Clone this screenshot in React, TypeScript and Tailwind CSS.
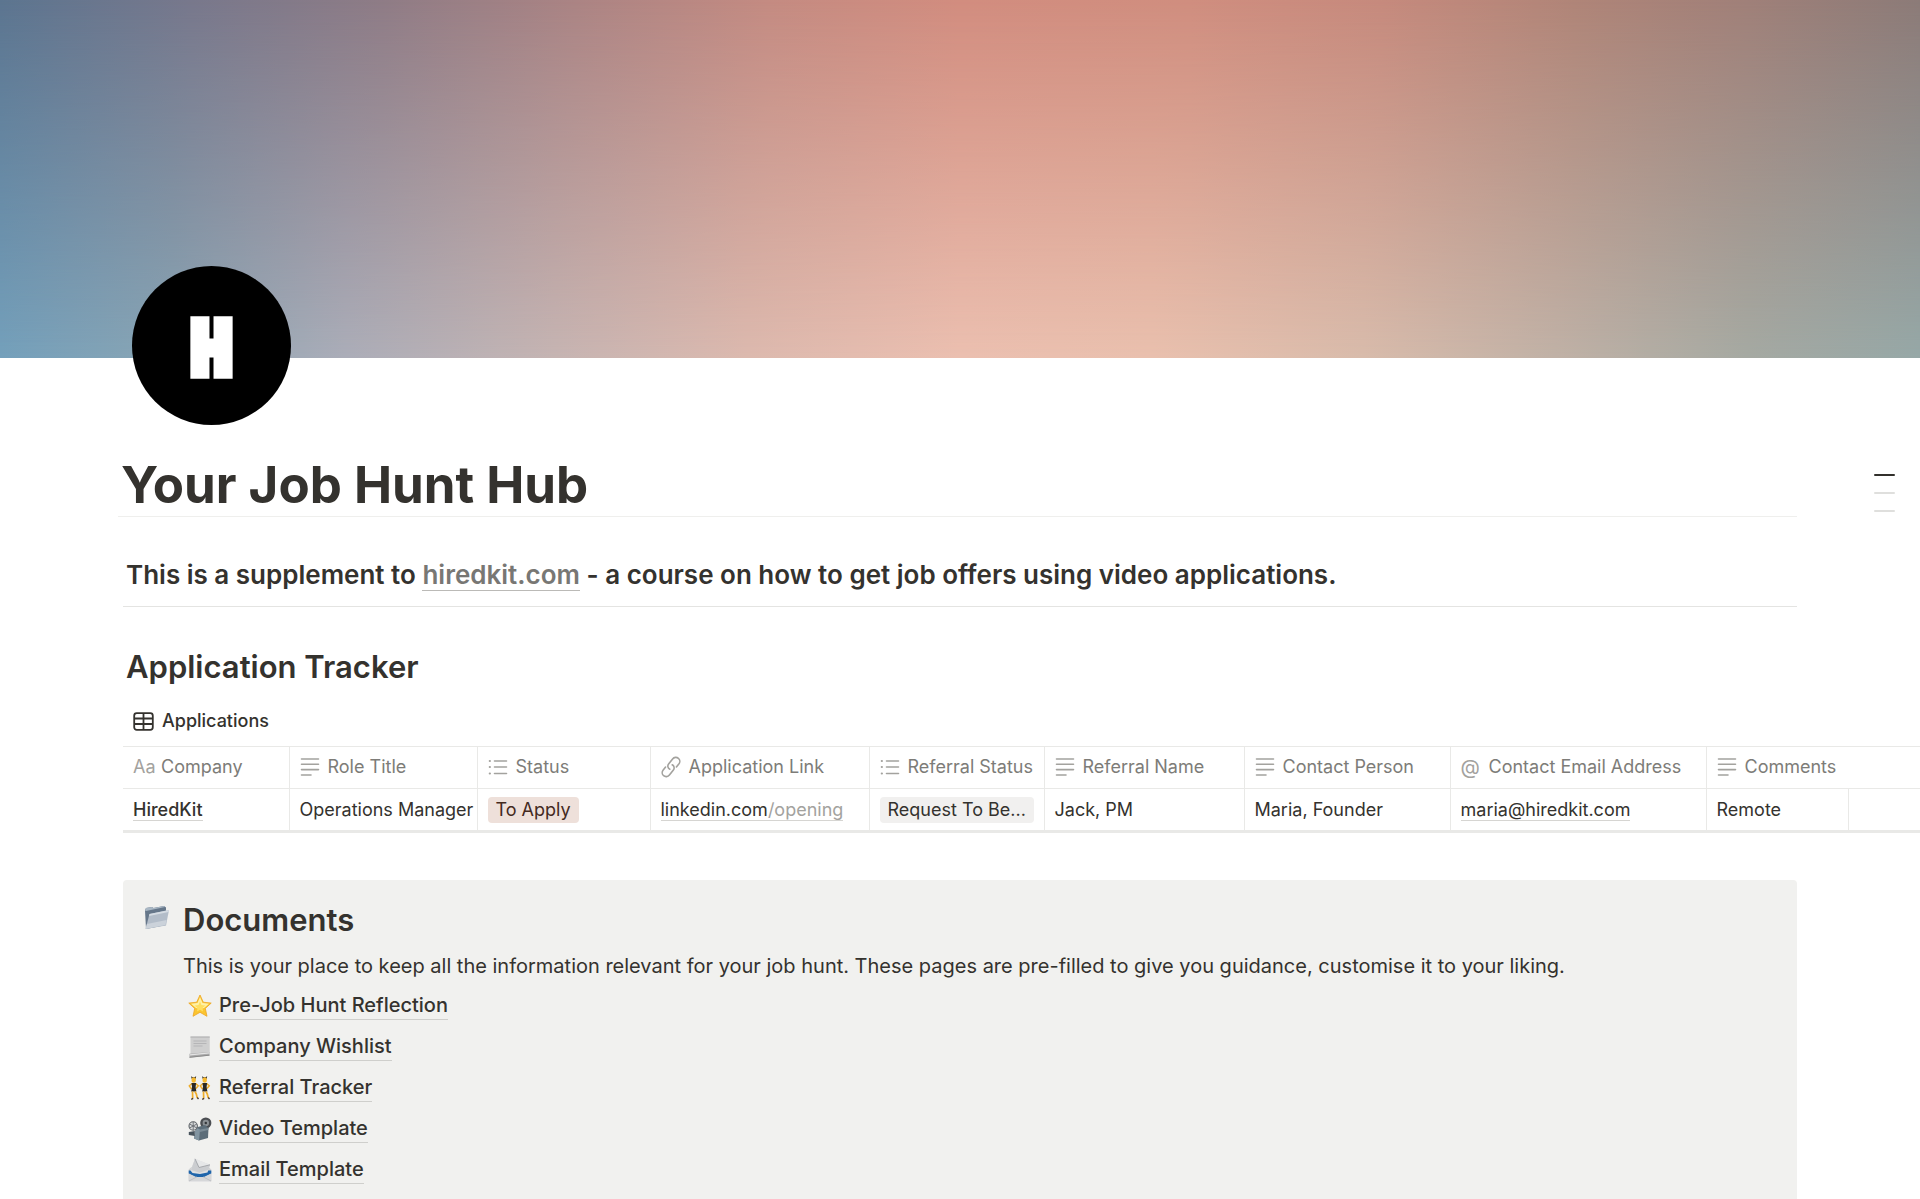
import type { ReactNode } from "react";

function TextIcon() {
  return (
    <svg width="20" height="20" viewBox="0 0 20 20" fill="none" stroke="currentColor" strokeWidth="1.6" strokeLinecap="round" className="shrink-0">
      <path d="M1.5 2h17M1.5 7.3h17M1.5 12.6h17M1.5 18h9.5" />
    </svg>
  );
}

function ListIcon() {
  return (
    <svg width="20" height="20" viewBox="0 0 20 20" fill="none" stroke="currentColor" strokeWidth="1.6" strokeLinecap="round" className="shrink-0">
      <path d="M6.5 4h12M6.5 10h12M6.5 16.5h12" />
      <path d="M1.8 4h.1M1.8 10h.1M1.8 16.5h.1" strokeWidth="2.2" />
    </svg>
  );
}

function LinkIcon() {
  return (
    <svg width="20" height="24" viewBox="0 0 20 24" fill="none" stroke="currentColor" strokeWidth="1.6" strokeLinecap="round" className="-my-[2px] shrink-0">
      <path d="M8.8 14.2c-2-.9-2.600-3.400-1.200-5.200l4-5c1.500-1.900 4.100-2.100 5.800-.7 1.700 1.400 1.900 3.900.4 5.800l-2.400 2.900" />
      <path d="M11.2 9.8c2 .9 2.600 3.400 1.200 5.200l-4 5c-1.500 1.900-4.100 2.100-5.800.7-1.700-1.400-1.900-3.900-.4-5.800l2.400-2.900" />
    </svg>
  );
}

function TableIcon() {
  return (
    <svg width="21" height="21" viewBox="0 0 21 21" fill="none" stroke="currentColor" strokeWidth="1.8" className="shrink-0">
      <rect x="1.2" y="2.2" width="18.6" height="16.6" rx="2.5" />
      <path d="M1.2 7.5h18.6M1.2 13h18.6M10.5 2.2v16.6" />
    </svg>
  );
}

function Folder() {
  return (
    <svg width="26" height="26" viewBox="0 0 26 26" className="mt-[5px] shrink-0">
      <path d="M1 5.500 2 3l6-1 1.500 1L20 1l2 1.500V20L2 24z" fill="#66778a" />
      <path d="M1 5.500 2 3l6-1 1.500 1L20 1l1 1-19 4z" fill="#a9b7c4" />
      <path d="M5.500 9 25 5l-3 15.500L1.500 24z" fill="#b3bdc9" />
      <path d="M5.500 9 25 5l-.4 2L5 11z" fill="#d5dce3" />
      <path d="m3 19 19.500-4-1 5L1.500 24z" fill="#cbd2da" />
    </svg>
  );
}

function Star() {
  return (
    <svg width="24" height="24" viewBox="0 0 24 24">
      <path d="m12 1 3.300 7.200 7.900.9-5.900 5.300 1.700 7.900-7-4-7 4 1.700-7.900L.8 9.100l7.900-.9z" fill="#fbc52f" stroke="#eda41f" strokeWidth=".8" strokeLinejoin="round" />
      <path d="m12 3 2.500 6 6.500.8-5 4.200-4 1-4-1-5-4.200L9.500 9z" fill="#fff1a8" />
      <path d="M12 7.500 13.500 11l4 .5-3 2.500.5 3.500-3-1.800L9 17.500l.5-3.500-3-2.500 4-.5z" fill="#ffdf61" />
    </svg>
  );
}

function Scroll() {
  return (
    <svg width="24" height="24" viewBox="0 0 24 24">
      <path d="M2.500 1.500h19.200v16.800L2.500 20z" fill="#cfcfcf" />
      <path d="M2.500 1.500h19.200v1.200H2.500z" fill="#b5b5b5" />
      <path d="M5.500 6h13M5.500 8.500h13M5.500 11h9" stroke="#b2b2b4" strokeWidth=".9" />
      <path d="m1.500 18.800 20-1.800v3.500l-20 2.300z" fill="#aaa" />
      <path d="m2 19.800 19.500-1.900" stroke="#e4e4e4" strokeWidth="1.2" />
      <path d="m1.500 22.300 20-2.100" stroke="#878787" strokeWidth=".9" />
    </svg>
  );
}

function Dancer() {
  return (
    <>
      <path d="M3.800 3 3 .3l1.700 1h1.800L8.200.3 7.500 3z" fill="#2a2724" />
      <ellipse cx="5.7" cy="4" rx="2.2" ry="2.7" fill="#f5b82e" />
      <path d="M4 7.500 1.300 9.800 3.500 13M7.600 7.500l2.600 2.300L8 12.500" fill="none" stroke="#f0ad2a" strokeWidth="1.5" />
      <path d="M3.500 7h4.600l-.5 4 .8 4.500H3.200L4 11z" fill="#2b2825" />
      <path d="m4.500 15.500.2 6.500M7 15.500 8.300 18l1 4" fill="none" stroke="#f0ad2a" strokeWidth="1.7" />
      <path d="m5.200 22.300-2 1M9.300 21.500l1.200 1.500" stroke="#4a3524" strokeWidth="1.3" />
    </>
  );
}

function Dancers() {
  return (
    <svg width="24" height="24" viewBox="0 0 24 24">
      <Dancer />
      <g transform="translate(11 0)">
        <Dancer />
      </g>
    </svg>
  );
}

function Projector() {
  return (
    <svg width="24" height="24" viewBox="0 0 24 24">
      <circle cx="17.8" cy="6" r="5.6" fill="#4b4e52" />
      <circle cx="17.8" cy="6" r="3.2" fill="#8c9195" />
      <circle cx="17.8" cy="6" r="1.2" fill="#34373a" />
      <path d="m8 10.500 9-2.500 3.500 3-.5 10-9 2.500-5-2z" fill="#5c6d79" />
      <path d="m8 10.500 4 2-1 11-5-2z" fill="#8295a1" />
      <path d="m12 12.500 8.500-1.500-.2 2L12 15z" fill="#7b8b96" />
      <circle cx="5.2" cy="9" r="4.2" fill="#d8dadb" stroke="#5d6266" strokeWidth="1.1" />
      <path d="M5.200 5v8M1.500 7l7.400 4M1.500 11l7.400-4" stroke="#666b70" strokeWidth=".9" />
      <path d="m.8 15 6-1v5l-6-1z" fill="#48545d" />
    </svg>
  );
}

function Envelope() {
  return (
    <svg width="24" height="24" viewBox="0 0 24 24">
      <path d="M.7 11.500 3.500 9h17l2.800 2.500V23.300H.7z" fill="#cfd0d2" />
      <path d="M.7 12.500h22.600v3L17 19H7L.7 15.500z" fill="#1f65ab" />
      <path d="M2.500 12.500 7 .8l15 6-2.500 7.700L12 16l-7.500-1z" fill="#dfe0e1" />
      <path d="m7 .8 4 8.700L22 6.800l-1.500 5-9 3L3 12z" fill="#cbcdd0" />
      <path d="m7 .8 4 8.700L22 6.800z" fill="#e6e7e8" />
      <path d="m7 .8 4 8.700L22 6.800" fill="none" stroke="#9fa2a6" strokeWidth=".9" />
      <path d="m.7 15.500 7 3.200q4.300 1 8.600 0l7-3.200v7.800H.7z" fill="#d6d7d9" />
      <path d="m1 23 8-4.200M23 23l-8-4.200" stroke="#b4b6b9" strokeWidth=".7" />
    </svg>
  );
}

type Column = { name: string; icon: ReactNode };

const columns: Column[] = [
  { name: "Company", icon: <span className="w-5 shrink-0">Aa</span> },
  { name: "Role Title", icon: <TextIcon /> },
  { name: "Status", icon: <ListIcon /> },
  { name: "Application Link", icon: <LinkIcon /> },
  { name: "Referral Status", icon: <ListIcon /> },
  { name: "Referral Name", icon: <TextIcon /> },
  { name: "Contact Person", icon: <TextIcon /> },
  { name: "Contact Email Address", icon: <span className="w-5 shrink-0 text-xl leading-5">@</span> },
  { name: "Comments", icon: <TextIcon /> },
];

const documents = [
  { title: "Pre-Job Hunt Reflection", icon: <Star /> },
  { title: "Company Wishlist", icon: <Scroll /> },
  { title: "Referral Tracker", icon: <Dancers /> },
  { title: "Video Template", icon: <Projector /> },
  { title: "Email Template", icon: <Envelope /> },
];

function Cover() {
  return (
    <div className="h-[358px] shrink-0 bg-[linear-gradient(90deg,#5c7590,#78788c_10%,#8f7c86_20%,#ab8484_30%,#c48b82_40%,#d28d7f_50%,#d08e7f_62%,#c68a7d_72%,#b08578_82%,#a08079_91%,#8c7b78)]">
      <div className="h-full bg-[linear-gradient(90deg,#74a0bb,#8aa5b4_9%,#abadb8_18%,#c6b4b2_29%,#dcb9ae_39%,#ebbfb0_50%,#e9c0ae_60%,#d8bbab_71%,#c0b1a6_81%,#a5a9a2_91%,#96a8a7)] [mask-image:linear-gradient(transparent,black)]" />
    </div>
  );
}

function Tracker() {
  return (
    <div className="pl-[123px]">
      <table className="w-full table-fixed border-collapse border-t border-b-3 border-[#e9e9e7] text-left text-lg leading-6">
        <colgroup>
          <col className="w-[166px]" />
          <col className="w-[188px]" />
          <col className="w-[173px]" />
          <col className="w-[219px]" />
          <col className="w-[175px]" />
          <col className="w-[200px]" />
          <col className="w-[206px]" />
          <col className="w-[256px]" />
          <col className="w-[142px]" />
          <col />
        </colgroup>
        <thead>
          <tr className="h-[42px] border-b border-[#e9e9e7] text-[#7d7c78]">
            {columns.map((col) => (
              <th key={col.name} className="border-[#e9e9e7] pb-[2px] pl-[10px] font-normal not-first:border-l">
                <div className="flex items-center gap-2 whitespace-nowrap">
                  <span className="flex text-[#a3a29e]">{col.icon}</span>
                  {col.name}
                </div>
              </th>
            ))}
            <td />
          </tr>
        </thead>
        <tbody>
          <tr className="h-[43px] whitespace-nowrap *:border-[#e9e9e7] *:pl-[10px] *:not-first:border-l">
            <td>
              <a href="#" className="border-b border-[#d6d5d2] font-medium">HiredKit</a>
            </td>
            <td>Operations Manager</td>
            <td>
              <span className="inline-block rounded-[4px] bg-[#eee0da] px-2 py-px text-[#442a1e]">To Apply</span>
            </td>
            <td>
              <a href="#" className="border-b border-[#d6d5d2]">
                linkedin.com<span className="text-[#a3a29e]">/opening</span>
              </a>
            </td>
            <td>
              <span className="inline-block rounded-[4px] bg-[#f1f0ef] px-2 py-px">Request To Be...</span>
            </td>
            <td>Jack, PM</td>
            <td>Maria, Founder</td>
            <td>
              <a href="#" className="border-b border-[#d6d5d2]">maria@hiredkit.com</a>
            </td>
            <td>Remote</td>
            <td />
          </tr>
        </tbody>
      </table>
    </div>
  );
}

export default function App() {
  return (
    <div className="relative flex h-screen flex-col overflow-hidden bg-white font-['Inter',sans-serif] text-[#34322e]">
      <Cover />
      <svg width="159" height="159" viewBox="0 0 158 158" className="relative -mt-[92px] ml-[132px] shrink-0">
        <circle cx="79" cy="79" r="79" />
        <path d="M58 50h19v22h4V50h19v62H81V91h-4v21H58z" fill="#fff" />
      </svg>

      <header className="mr-[123px] ml-[118px] border-b border-[#efefed] pt-[30px] pb-px pl-[3px]">
        <h1 className="text-[51px] leading-[60px] font-bold">Your Job Hunt Hub</h1>
      </header>

      <h3 className="mx-[123px] mt-[40px] border-b border-[#e4e4e2] pb-[13px] pl-[3px] text-[26px] leading-9 font-semibold">
        This is a supplement to{" "}
        <a href="#" className="border-b border-[#bbbab7] text-[#787774]">hiredkit.com</a> - a course on how to get job offers using video applications.
      </h3>

      <h2 className="mt-[40px] ml-[126px] text-[31px] leading-10 font-semibold">Application Tracker</h2>
      <button className="mt-[22px] mb-[13px] ml-[133px] flex items-center gap-2 self-start text-lg leading-6 font-medium">
        <TableIcon />
        Applications
      </button>
      <Tracker />

      <section className="mx-[123px] mt-[47px] flex flex-1 gap-[13px] rounded-t-[4px] bg-[#f1f1ef] px-[21px] pt-[20px]">
        <Folder />
        <div>
          <h2 className="text-[31px] leading-10 font-semibold">Documents</h2>
          <p className="mt-[6px] mb-[-1px] text-xl leading-10">
            This is your place to keep all the information relevant for your job hunt. These pages are pre-filled to give you guidance, customise it to your liking.
          </p>
          <ul className="pl-[5px]">
            {documents.map((doc) => (
              <li key={doc.title} className="flex h-[41px] items-center gap-[7px]">
                {doc.icon}
                <a href="#" className="border-b border-[#cfcfcc] text-xl leading-7 font-medium">{doc.title}</a>
              </li>
            ))}
          </ul>
        </div>
      </section>

      <nav aria-label="Table of contents" className="absolute top-[474px] right-[25px] flex flex-col gap-4">
        <a href="#" aria-label="Your Job Hunt Hub" className="h-[2px] w-[21px] rounded-full bg-[#32302c]" />
        <a href="#" aria-label="Application Tracker" className="h-[2px] w-[21px] rounded-full bg-[#dfdfdd]" />
        <a href="#" aria-label="Documents" className="h-[2px] w-[21px] rounded-full bg-[#dfdfdd]" />
      </nav>
    </div>
  );
}
